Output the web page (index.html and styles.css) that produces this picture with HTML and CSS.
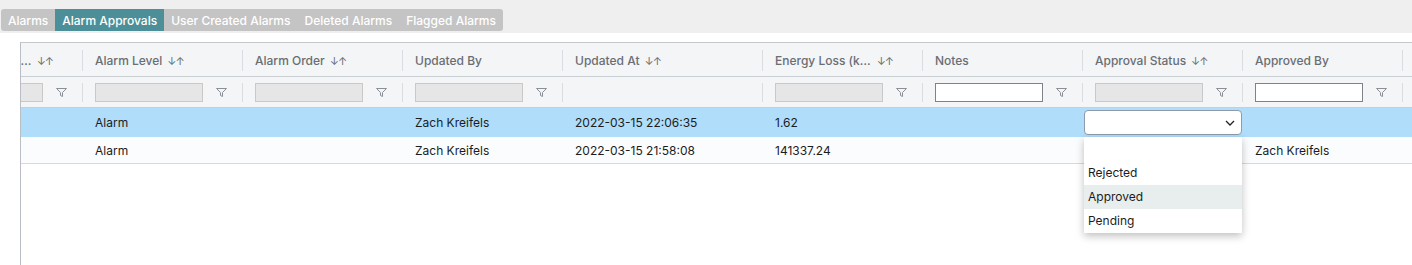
FILE: index.html
```html
<!DOCTYPE html>
<html lang="en">
  <head>
    <meta charset="UTF-8" />
    <meta name="viewport" content="width=device-width, initial-scale=1.0" />
    <title>Alarm Approvals</title>
    <link rel="stylesheet" href="styles.css">
  </head>
  <body>
    <div class="tab-band">
      <div class="tabs">
        <span class="tab">Alarms</span>
        <span class="tab active">Alarm Approvals</span>
        <span class="tab">User Created Alarms</span>
        <span class="tab">Deleted Alarms</span>
        <span class="tab">Flagged Alarms</span>
      </div>
    </div>

    <div class="grid-wrap">
      <div class="grid-scroll">
        <table class="grid">
          <colgroup>
            <col style="width: 160px" />
            <col style="width: 160px" />
            <col style="width: 160px" />
            <col style="width: 160px" />
            <col style="width: 200px" />
            <col style="width: 160px" />
            <col style="width: 160px" />
            <col style="width: 160px" />
            <col style="width: 160px" />
            <col style="width: 160px" />
          </colgroup>
          <thead>
            <tr class="head-row">
              <th><div class="head"><span class="label">Alarm Description Number</span><span class="sort">↓↑</span></div></th>
              <th><div class="head"><span class="label">Alarm Level</span><span class="sort">↓↑</span></div></th>
              <th><div class="head"><span class="label">Alarm Order</span><span class="sort">↓↑</span></div></th>
              <th><div class="head"><span class="label">Updated By</span></div></th>
              <th><div class="head"><span class="label">Updated At</span><span class="sort">↓↑</span></div></th>
              <th><div class="head"><span class="label">Energy Loss (kWh)</span><span class="sort">↓↑</span></div></th>
              <th><div class="head"><span class="label">Notes</span></div></th>
              <th><div class="head"><span class="label">Approval Status</span><span class="sort">↓↑</span></div></th>
              <th><div class="head"><span class="label">Approved By</span></div></th>
              <th><div class="head"><span class="label">Approved At</span></div></th>
            </tr>
            <tr class="filter-row">
              <th><div class="filter"><input class="filter-input" disabled /><svg class="funnel" width="11" height="9" viewBox="0 0 11 9"><path d="M0.5 0.5 H10.5 L6.5 4.5 V8.5 L4.5 7.5 V4.5 Z" fill="none" stroke="#8a8f96" stroke-width="1"/></svg></div></th>
              <th><div class="filter"><input class="filter-input" disabled /><svg class="funnel" width="11" height="9" viewBox="0 0 11 9"><path d="M0.5 0.5 H10.5 L6.5 4.5 V8.5 L4.5 7.5 V4.5 Z" fill="none" stroke="#8a8f96" stroke-width="1"/></svg></div></th>
              <th><div class="filter"><input class="filter-input" disabled /><svg class="funnel" width="11" height="9" viewBox="0 0 11 9"><path d="M0.5 0.5 H10.5 L6.5 4.5 V8.5 L4.5 7.5 V4.5 Z" fill="none" stroke="#8a8f96" stroke-width="1"/></svg></div></th>
              <th><div class="filter"><input class="filter-input" disabled /><svg class="funnel" width="11" height="9" viewBox="0 0 11 9"><path d="M0.5 0.5 H10.5 L6.5 4.5 V8.5 L4.5 7.5 V4.5 Z" fill="none" stroke="#8a8f96" stroke-width="1"/></svg></div></th>
              <th><div class="filter"></div></th>
              <th><div class="filter"><input class="filter-input" disabled /><svg class="funnel" width="11" height="9" viewBox="0 0 11 9"><path d="M0.5 0.5 H10.5 L6.5 4.5 V8.5 L4.5 7.5 V4.5 Z" fill="none" stroke="#8a8f96" stroke-width="1"/></svg></div></th>
              <th><div class="filter"><input class="filter-input open" /><svg class="funnel" width="11" height="9" viewBox="0 0 11 9"><path d="M0.5 0.5 H10.5 L6.5 4.5 V8.5 L4.5 7.5 V4.5 Z" fill="none" stroke="#8a8f96" stroke-width="1"/></svg></div></th>
              <th><div class="filter"><input class="filter-input" disabled /><svg class="funnel" width="11" height="9" viewBox="0 0 11 9"><path d="M0.5 0.5 H10.5 L6.5 4.5 V8.5 L4.5 7.5 V4.5 Z" fill="none" stroke="#8a8f96" stroke-width="1"/></svg></div></th>
              <th><div class="filter"><input class="filter-input open" /><svg class="funnel" width="11" height="9" viewBox="0 0 11 9"><path d="M0.5 0.5 H10.5 L6.5 4.5 V8.5 L4.5 7.5 V4.5 Z" fill="none" stroke="#8a8f96" stroke-width="1"/></svg></div></th>
              <th><div class="filter"></div></th>
            </tr>
          </thead>
          <tbody>
            <tr class="row selected">
              <td></td>
              <td>Alarm</td>
              <td></td>
              <td>Zach Kreifels</td>
              <td>2022-03-15 22:06:35</td>
              <td>1.62</td>
              <td></td>
              <td class="edit-cell">
                <div class="select-holder">
                  <div class="select-box">
                    <svg width="10" height="6" viewBox="0 0 10 6"><path d="M1 1 L5 5 L9 1" fill="none" stroke="#222" stroke-width="1.3"/></svg>
                  </div>
                  <ul class="menu">
                    <li class="option"></li>
                    <li class="option">Rejected</li>
                    <li class="option hover">Approved</li>
                    <li class="option">Pending</li>
                  </ul>
                </div>
              </td>
              <td></td>
              <td></td>
            </tr>
            <tr class="row">
              <td></td>
              <td>Alarm</td>
              <td></td>
              <td>Zach Kreifels</td>
              <td>2022-03-15 21:58:08</td>
              <td>141337.24</td>
              <td></td>
              <td></td>
              <td>Zach Kreifels</td>
              <td></td>
            </tr>
          </tbody>
        </table>
      </div>
    </div>
  </body>
</html>
```

FILE: styles.css
```css
body {
  margin: 0;
  height: 265px;
  overflow: hidden;
  background: #ffffff;
  font-family: Inter, "Noto Sans", sans-serif;
  font-size: 12px;
  color: #1c1c1c;
}

.tab-band {
  height: 33px;
  padding: 9px 0 0 1px;
  box-sizing: border-box;
  background: #efefef;
}

.tabs {
  display: inline-flex;
  height: 22px;
  background: #c4c4c4;
  border-radius: 3px;
  overflow: hidden;
}

.tab {
  display: flex;
  align-items: center;
  padding: 0 7px;
  color: #ffffff;
  font-size: 12px;
  font-weight: 500;
}

.tab.active {
  background: #4c8f99;
}

.grid-wrap {
  margin: 9px 0 0 20px;
  height: 223px;
  border-left: 1px solid #b9bec4;
  border-top: 1px solid #c3c8cd;
}

.grid-scroll {
  height: 100%;
  overflow: hidden;
}

.grid {
  margin-left: -99px;
  table-layout: fixed;
  border-collapse: collapse;
  width: 1640px;
}

.grid th,
.grid td {
  padding: 0;
  text-align: left;
  font-weight: 400;
  white-space: nowrap;
}

.head-row th,
.filter-row th {
  background: #f3f5f7;
}

.head-row th {
  height: 31px;
  padding-top: 2px;
  border-bottom: 1px solid #c9ced3;
}

.filter-row th {
  height: 29px;
  padding-top: 1px;
  border-bottom: 1px solid #c9ced3;
}

.head {
  display: flex;
  align-items: center;
  height: 21px;
  padding: 0 29px 0 12px;
  border-left: 1px solid #d9dde1;
  color: #6a6e73;
  font-size: 12px;
  font-weight: 500;
}

.label {
  overflow: hidden;
  text-overflow: ellipsis;
  min-width: 0;
}

.sort {
  flex: none;
  margin-left: 5px;
  font-size: 11px;
  font-weight: 400;
  letter-spacing: -1px;
  color: #6a6e73;
}

.filter {
  display: flex;
  align-items: center;
  height: 19px;
  padding: 0 15px 0 12px;
  border-left: 1px solid #d9dde1;
}

.filter-input {
  width: 108px;
  height: 19px;
  box-sizing: border-box;
  margin: 0;
  padding: 0 4px;
  border: 1px solid #c9c9c9;
  background: #e6e6e6;
  border-radius: 0;
  font: inherit;
}

.filter-input.open {
  background: #ffffff;
  border-color: #7d838a;
}

.funnel {
  margin-left: auto;
  flex: none;
}

.row td {
  height: 26px;
  padding-left: 13px;
  border-bottom: 1px solid #d6dade;
}

.row {
  background: #fbfcfd;
}

.row.selected {
  background: #afddfa;
}

.row.selected td {
  height: 29px;
  border-bottom: 0;
}

.row td.edit-cell {
  padding-left: 2px;
  vertical-align: middle;
}

.select-holder {
  position: relative;
}

.select-box {
  display: flex;
  align-items: center;
  justify-content: flex-end;
  height: 25px;
  box-sizing: border-box;
  padding-right: 6px;
  background: #ffffff;
  border: 1px solid #8d9bad;
  border-radius: 4px;
}

.menu {
  position: absolute;
  top: 27px;
  left: 0;
  width: 158px;
  margin: 0;
  padding: 0;
  list-style: none;
  background: #ffffff;
  box-shadow: 0 3px 8px rgba(0, 0, 0, 0.25);
  z-index: 2;
}

.option {
  height: 24px;
  line-height: 24px;
  padding-left: 4px;
  color: #1c1c1c;
}

.option.hover {
  background: #e8eded;
}
```
